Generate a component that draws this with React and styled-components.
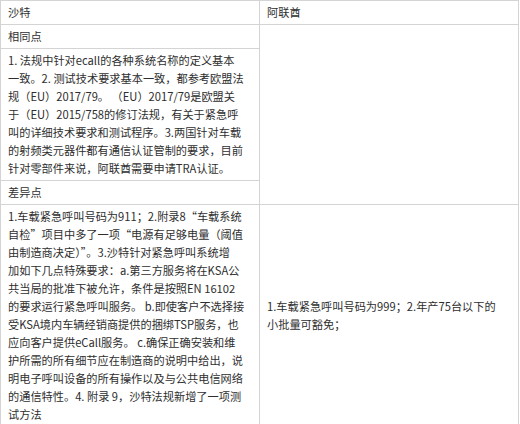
import React from 'react';
import styled, {createGlobalStyle} from 'styled-components';

const GlobalStyle = createGlobalStyle`
  body {
    margin: 0;
    background: #ffffff;
  }
`;

const Table = styled.table`
  border-collapse: collapse;
  table-layout: fixed;
  width: 518px;
  font-family: "Microsoft YaHei", "Noto Sans CJK SC", sans-serif;
  font-size: 11.2px;
  line-height: 18px;
  color: #2e2e2e;
`;

const Col = styled.col`
  width: ${p => p.$w}px;
`;

const Cell = styled.td`
  border: 1px solid #d4d4d4;
  padding: 2px 7px 3px;
  vertical-align: ${p => (p.$middle ? 'middle' : 'top')};
`;

const Line = styled.span`
  display: block;
  white-space: nowrap;
`;

// lines kept as they wrap in the source layout
const same = [
  '1. 法规中针对ecall的各种系统名称的定义基本',
  '一致。2. 测试技术要求基本一致，都参考欧盟法',
  '规（EU）2017/79。 （EU）2017/79是欧盟关',
  '于（EU）2015/758的修订法规，有关于紧急呼',
  '叫的详细技术要求和测试程序。3.两国针对车载',
  '的射频类元器件都有通信认证管制的要求，目前',
  '针对零部件来说，阿联酋需要申请TRA认证。',
];

const diff = [
  '1.车载紧急呼叫号码为911；2.附录8“车载系统',
  '自检”项目中多了一项“电源有足够电量（阈值',
  '由制造商决定）”。3.沙特针对紧急呼叫系统增',
  '加如下几点特殊要求：a.第三方服务将在KSA公',
  '共当局的批准下被允许，条件是按照EN 16102',
  '的要求运行紧急呼叫服务。 b.即使客户不选择接',
  '受KSA境内车辆经销商提供的捆绑TSP服务，也',
  '应向客户提供eCall服务。 c.确保正确安装和维',
  '护所需的所有细节应在制造商的说明中给出，说',
  '明电子呼叫设备的所有操作以及与公共电信网络',
  '的通信特性。4. 附录 9，沙特法规新增了一项测',
  '试方法',
];

const uae = [
  '1.车载紧急呼叫号码为999；2.年产75台以下的',
  '小批量可豁免；',
];

const Lines = ({items}) => items.map((t, i) => <Line key={i}>{t}</Line>);

const App = () => <>
  <GlobalStyle/>
  <Table>
    <colgroup>
      <Col $w={259}/>
      <Col $w={259}/>
    </colgroup>
    <tbody>
      <tr>
        <Cell>沙特</Cell>
        <Cell>阿联酋</Cell>
      </tr>
      <tr>
        <Cell>相同点</Cell>
        <Cell rowSpan={3}/>
      </tr>
      <tr>
        <Cell><Lines items={same}/></Cell>
      </tr>
      <tr>
        <Cell>差异点</Cell>
      </tr>
      <tr>
        <Cell><Lines items={diff}/></Cell>
        <Cell $middle><Lines items={uae}/></Cell>
      </tr>
    </tbody>
  </Table>
</>;

export default App;
